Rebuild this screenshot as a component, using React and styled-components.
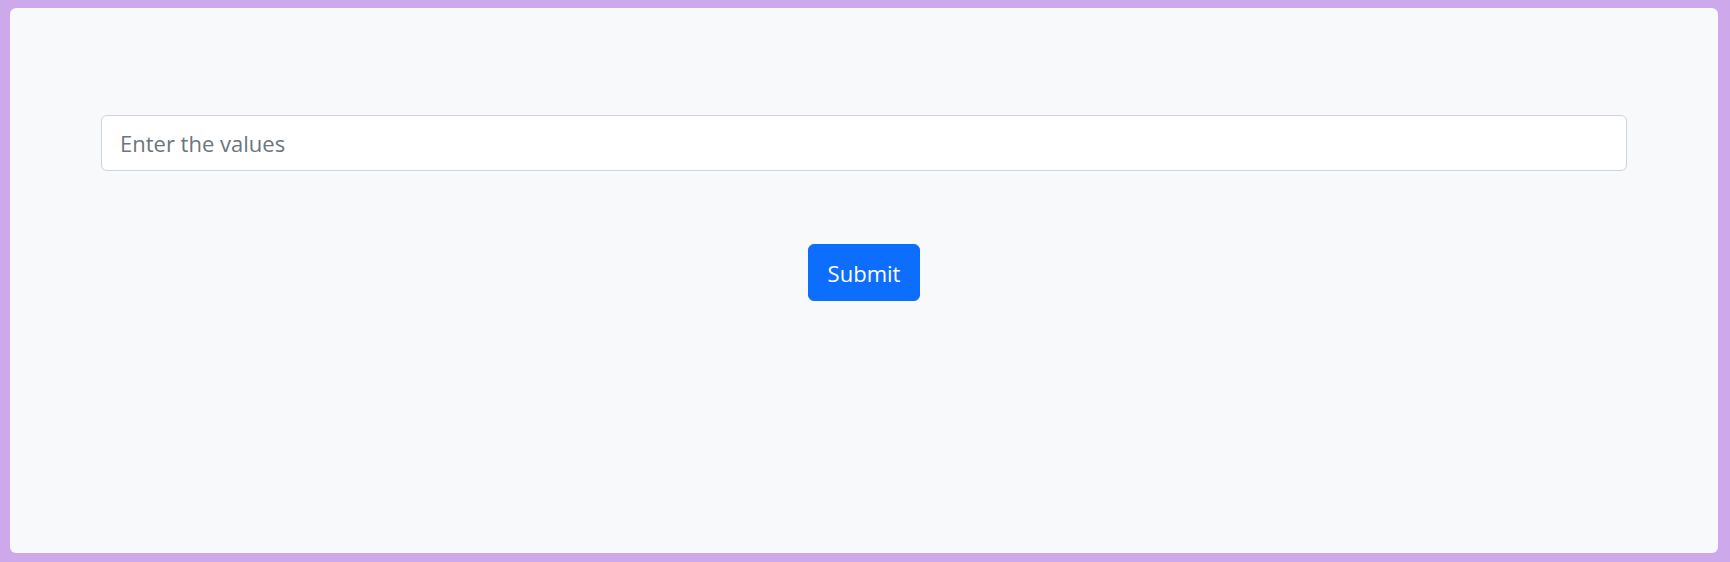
import React from 'react';
import styled, { createGlobalStyle } from 'styled-components';

const GlobalStyle = createGlobalStyle`
  html, body {
    margin: 0;
    height: 100%;
    background: #cda9ec;
  }
  #root {
    height: 100%;
  }
  * {
    box-sizing: border-box;
  }
`;

const Page = styled.div`
  height: 100%;
  padding: 8px 12px 9px 10px;
  display: flex;
`;

const Card = styled.div`
  flex: 1;
  background: #f8f9fa;
  border-radius: 6px;
  padding: 107px 91px 0;
  display: flex;
  flex-direction: column;
  align-items: center;
  gap: 73px;
  font-family: 'Open Sans', 'Noto Sans', sans-serif;
`;

const Input = styled.input`
  width: 100%;
  height: 56px;
  padding: 0 18px;
  font-family: inherit;
  font-size: 22px;
  color: #212529;
  background: #fff;
  border: 1px solid #ced4da;
  border-radius: 6px;
  outline: none;

  &::placeholder {
    color: #6c757d;
  }
`;

const Button = styled.button`
  height: 57px;
  padding: 0 19px;
  font-family: inherit;
  font-size: 22px;
  color: #fff;
  background: #0d6efd;
  border: 1px solid #0d6efd;
  border-radius: 6px;
  cursor: pointer;
`;

const App = () => {
  return (
    <>
      <GlobalStyle />
      <Page>
        <Card>
          <Input type="text" placeholder="Enter the values" />
          <Button type="button">Submit</Button>
        </Card>
      </Page>
    </>
  );
};

export default App;
